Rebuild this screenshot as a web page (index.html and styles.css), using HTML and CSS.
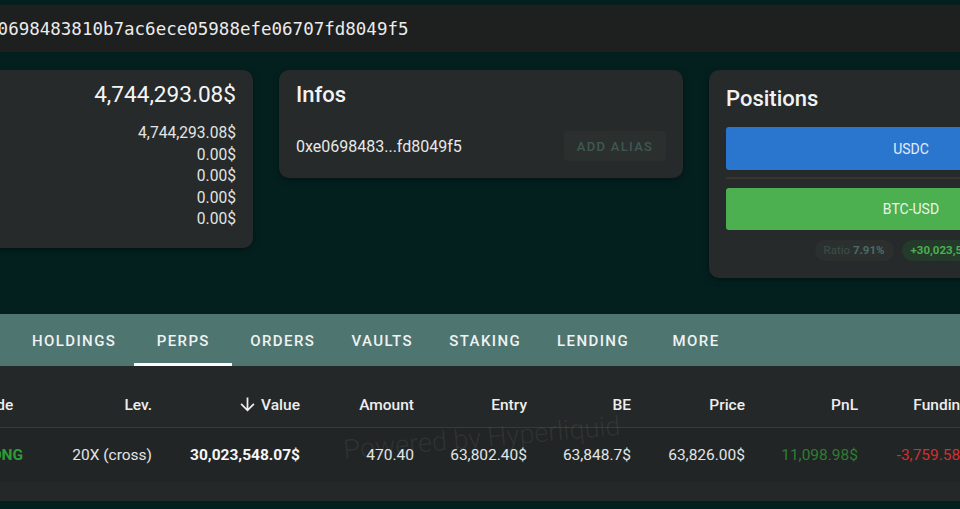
FILE: index.html
```html
<!DOCTYPE html>
<html lang="en">
<head>
    <meta charset="UTF-8">
    <meta name="viewport" content="width=device-width, initial-scale=1.0">
    <title>Wallet Overview</title>
    <link rel="stylesheet" href="styles.css">
</head>
<body>
    <div class="address-bar">
        <span class="address-full">0xe0698483810b7ac6ece05988efe06707fd8049f5</span>
    </div>

    <div class="cards">
        <div class="card balance-card">
            <div class="balance-total">4,744,293.08$</div>
            <div class="balance-lines">
                <div>4,744,293.08$</div>
                <div>0.00$</div>
                <div>0.00$</div>
                <div>0.00$</div>
                <div>0.00$</div>
            </div>
        </div>

        <div class="card infos-card">
            <h2 class="card-title">Infos</h2>
            <div class="infos-row">
                <span class="short-address">0xe0698483...fd8049f5</span>
                <button class="alias-button" type="button">Add alias</button>
            </div>
        </div>

        <div class="card positions-card">
            <h2 class="card-title">Positions</h2>
            <div class="pos-bar usdc">USDC</div>
            <div class="pos-divider"></div>
            <div class="pos-bar btc">BTC-USD</div>
            <div class="chips">
                <span class="chip">Ratio <b>7.91%</b></span>
                <span class="chip chip-green"><b>+30,023,548.07$</b></span>
            </div>
        </div>
    </div>

    <nav class="tabs">
        <a class="tab">Holdings</a>
        <a class="tab active">Perps</a>
        <a class="tab">Orders</a>
        <a class="tab">Vaults</a>
        <a class="tab">Staking</a>
        <a class="tab">Lending</a>
        <a class="tab">More</a>
    </nav>

    <section class="perps-table">
        <div class="trow thead">
            <div class="cell left">Side</div>
            <div class="cell">Lev.</div>
            <div class="cell sorted">
                <svg viewBox="0 0 24 24" width="21" height="21"><path fill="currentColor" d="M20 12l-1.41-1.41L13 16.17V4h-2v12.17l-5.58-5.59L4 12l8 8 8-8z"/></svg>
                Value
            </div>
            <div class="cell">Amount</div>
            <div class="cell">Entry</div>
            <div class="cell">BE</div>
            <div class="cell">Price</div>
            <div class="cell">PnL</div>
            <div class="cell">Funding</div>
        </div>
        <div class="trow tbody">
            <div class="cell left side-long">LONG</div>
            <div class="cell">20X (cross)</div>
            <div class="cell strong">30,023,548.07$</div>
            <div class="cell">470.40</div>
            <div class="cell">63,802.40$</div>
            <div class="cell">63,848.7$</div>
            <div class="cell">63,826.00$</div>
            <div class="cell pnl-up">11,098.98$</div>
            <div class="cell pnl-down">-3,759.58$</div>
        </div>
        <div class="watermark">Powered by Hyperliquid</div>
    </section>
</body>
</html>
```

FILE: styles.css
```css
html, body {
    overflow: hidden;
}

body {
    margin: 0;
    width: 960px;
    height: 509px;
    background-color: #03201f;
    font-family: Roboto, 'Noto Sans', sans-serif;
    color: #e9ecec;
}

/* address input on top */
.address-bar {
    margin-top: 5px;
    height: 47px;
    background-color: #1e1f1f;
    display: flex;
    align-items: center;
    white-space: nowrap;
}

.address-full {
    margin-left: -34px;
    font-family: 'DejaVu Sans Mono', monospace;
    font-size: 17.5px;
    color: #ebebeb;
}

/* summary cards */
.cards {
    display: grid;
    grid-template-columns: repeat(3, 404px);
    column-gap: 26px;
    align-items: start;
    margin: 18px 0 0 -151px;
}

.card {
    background-color: #262a2a;
    border-radius: 10px;
    box-shadow: 0 2px 6px rgba(0, 0, 0, 0.35);
    padding: 12px 17px 17px;
}

.card-title {
    margin: 0;
    font-size: 22px;
    line-height: 26px;
    font-weight: 500;
    color: #f2f2f2;
}

.balance-card {
    text-align: right;
}

.balance-total {
    font-size: 22.6px;
    line-height: 26px;
    color: #f4f4f4;
}

.balance-lines {
    margin-top: 15px;
    font-size: 15.6px;
    line-height: 21.5px;
    color: #e2e4e4;
}

.infos-row {
    display: flex;
    align-items: center;
    justify-content: space-between;
    margin-top: 23px;
}

.short-address {
    font-size: 16px;
    color: #e6e8e8;
}

.alias-button {
    height: 30px;
    width: 102px;
    border: none;
    border-radius: 4px;
    background-color: #2b302f;
    color: #3f5854;
    font-family: inherit;
    font-size: 13px;
    font-weight: 500;
    letter-spacing: 1.3px;
    text-transform: uppercase;
}

.positions-card {
    padding-top: 16px;
}

.pos-bar {
    display: flex;
    align-items: center;
    justify-content: center;
    border-radius: 3px;
    font-size: 14px;
    height: 43px;
}

.usdc {
    margin-top: 15px;
    background-color: #2a76cf;
    color: #e3ecf7;
}

.btc {
    height: 42px;
    background-color: #4caf50;
    color: #eaf6ea;
}

.pos-divider {
    height: 2px;
    margin: 7px 0 9px;
    background-color: #3a3331;
}

.chips {
    display: flex;
    justify-content: center;
    gap: 8px;
    margin-top: 10px;
    white-space: nowrap;
}

.chip {
    height: 21px;
    line-height: 21px;
    padding: 0 9px;
    border-radius: 11px;
    background-color: #2b302f;
    font-size: 11.5px;
    color: #3c4e4b;
}

.chip b {
    color: #4d6a66;
    font-weight: 700;
}

.chip-green {
    background-color: #243a2b;
}

.chip-green b {
    color: #4caf50;
}

/* tabs */
.tabs {
    display: flex;
    margin-top: 36px;
    height: 52px;
    padding-left: 14px;
    background-color: #4f7571;
}

.tab {
    min-width: 98px;
    padding: 5px 18px 0;
    box-sizing: border-box;
    display: flex;
    align-items: center;
    justify-content: center;
    font-size: 15px;
    font-weight: 500;
    letter-spacing: 1.4px;
    text-transform: uppercase;
    color: #eef3f2;
    border-bottom: 3px solid transparent;
}

.tab.active {
    border-bottom-color: #ffffff;
}

/* perps table */
.perps-table {
    position: relative;
    background-color: #252828;
    padding: 16px 0 19px;
}

.trow {
    display: grid;
    grid-template-columns: 103px 98px 148px 114px 113px 104px 114px 113px 111px;
    margin-left: -33px;
    white-space: nowrap;
}

.thead {
    height: 45px;
    border-bottom: 1px solid #363b3b;
    font-weight: 500;
    color: #eeeeee;
}

.tbody {
    height: 54px;
    background-color: #222525;
    color: #e3e5e5;
}

.cell {
    display: flex;
    align-items: center;
    justify-content: flex-end;
    padding: 0 16px;
    font-size: 15.5px;
}

.cell.left {
    justify-content: flex-start;
}

.sorted svg {
    margin-right: 3px;
}

.strong {
    font-weight: 700;
    color: #f6f6f6;
}

.side-long {
    color: #2e9b35;
    font-weight: 700;
}

.pnl-up {
    color: #2e7d32;
}

.pnl-down {
    color: #d32f2f;
}

.watermark {
    position: absolute;
    left: 343px;
    top: 56px;
    font-size: 27px;
    font-weight: 300;
    color: rgba(255, 255, 255, 0.075);
    transform: rotate(-5deg);
    white-space: nowrap;
    pointer-events: none;
}
```
